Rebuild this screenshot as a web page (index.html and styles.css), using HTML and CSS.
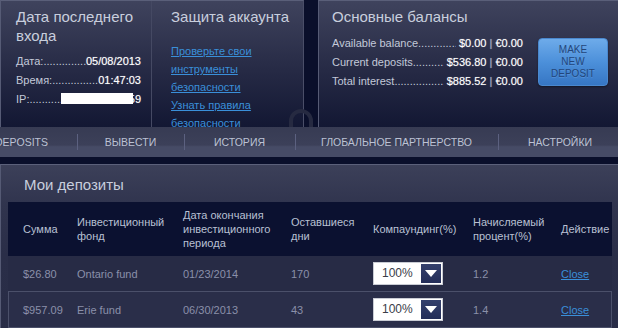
FILE: index.html
```html
<!DOCTYPE html>
<html lang="ru">
<head>
<meta charset="utf-8">
<title>Мои депозиты</title>
<link rel="stylesheet" href="styles.css">
</head>
<body>
<div class="top">
  <section class="panel login-panel">
    <div class="col col-login">
      <h2 class="panel-title">Дата последнего входа</h2>
      <div class="info">
        <div class="kv"><span class="lbl">Дата:</span><span class="dots"></span><span class="val">05/08/2013</span></div>
        <div class="kv"><span class="lbl">Время:</span><span class="dots"></span><span class="val">01:47:03</span></div>
        <div class="kv"><span class="lbl">IP:</span><span class="dots"></span><span class="val"><span class="redact"></span>.59</span></div>
      </div>
    </div>
    <div class="col col-security">
      <h2 class="panel-title">Защита аккаунта</h2>
      <div class="links">
        <a href="#" class="sec-link">Проверьте свои инструменты безопасности</a>
        <a href="#" class="sec-link">Узнать правила безопасности</a>
      </div>
      <svg class="lock" width="30" height="30" viewBox="0 0 30 30"><path d="M5 30 V14 a10 10 0 0 1 20 0 V30" fill="none" stroke="#262a41" stroke-width="4"/></svg>
    </div>
  </section>
  <section class="panel balance-panel">
    <h2 class="panel-title">Основные балансы</h2>
    <div class="balance-row">
      <div class="balances">
        <div class="kv"><span class="lbl">Available balance</span><span class="dots"></span><span class="val">$0.00 <span class="sep">|</span> €0.00</span></div>
        <div class="kv"><span class="lbl">Current deposits</span><span class="dots"></span><span class="val">$536.80 <span class="sep">|</span> €0.00</span></div>
        <div class="kv"><span class="lbl">Total interest</span><span class="dots"></span><span class="val">$885.52 <span class="sep">|</span> €0.00</span></div>
      </div>
      <button class="deposit-btn">MAKE<br>NEW<br>DEPOSIT</button>
    </div>
  </section>
</div>

<nav class="nav">
  <a href="#" class="nav-item first">DEPOSITS</a>
  <a href="#" class="nav-item w2">ВЫВЕСТИ</a>
  <a href="#" class="nav-item w3">ИСТОРИЯ</a>
  <a href="#" class="nav-item w4">ГЛОБАЛЬНОЕ ПАРТНЕРСТВО</a>
  <a href="#" class="nav-item w5">НАСТРОЙКИ</a>
</nav>

<section class="deposits">
  <h2 class="panel-title deposits-title">Мои депозиты</h2>
  <div class="table">
    <div class="thead">
      <div class="c c1">Сумма</div>
      <div class="c c2">Инвестиционный фонд</div>
      <div class="c c3">Дата окончания инвестиционного периода</div>
      <div class="c c4">Оставшиеся дни</div>
      <div class="c c5">Компаундинг(%)</div>
      <div class="c c6">Начисляемый процент(%)</div>
      <div class="c c7">Действие</div>
    </div>
    <div class="trow">
      <div class="c c1">$26.80</div>
      <div class="c c2">Ontario fund</div>
      <div class="c c3">01/23/2014</div>
      <div class="c c4">170</div>
      <div class="c c5"><div class="select"><span class="sel-val">100%</span><span class="sel-btn"><svg width="12" height="7" viewBox="0 0 12 7"><path d="M0 0 H12 L6 7 Z" fill="#fff"/></svg></span></div></div>
      <div class="c c6">1.2</div>
      <div class="c c7"><a href="#" class="close-link">Close</a></div>
    </div>
    <div class="trow bordered">
      <div class="c c1">$957.09</div>
      <div class="c c2">Erie fund</div>
      <div class="c c3">06/30/2013</div>
      <div class="c c4">43</div>
      <div class="c c5"><div class="select"><span class="sel-val">100%</span><span class="sel-btn"><svg width="12" height="7" viewBox="0 0 12 7"><path d="M0 0 H12 L6 7 Z" fill="#fff"/></svg></span></div></div>
      <div class="c c6">1.4</div>
      <div class="c c7"><a href="#" class="close-link">Close</a></div>
    </div>
  </div>
</section>
</body>
</html>
```

FILE: styles.css
```css
* { box-sizing: border-box; }
html, body {
  margin: 0;
  padding: 0;
  width: 618px;
  height: 328px;
  overflow: hidden;
  background: #0a0f2b;
  font-family: "Liberation Sans", Arial, sans-serif;
  font-size: 11px;
  color: #c3c9d9;
}
.top {
  display: flex;
  height: 127px;
  overflow: hidden;
}
.panel {
  background: linear-gradient(#3f435d 0%, #262a45 50%, #0e132f 100%);
  border-top: 1px solid #5a5f79;
  border-left: 1px solid #565b75;
  height: 140px;
}
.login-panel {
  width: 304px;
  display: flex;
  border-right: 1px solid #4a4e68;
  flex: none;
}
.balance-panel {
  margin-left: 14px;
  flex: 1;
  padding: 6px 0 0 13px;
}
.panel-title {
  margin: 0;
  font-weight: normal;
  font-size: 15px;
  line-height: 19px;
  color: #c8cedd;
}
.col { height: 100%; }
.col-login {
  width: 151px;
  padding: 6px 10px 0 15px;
  border-right: 1px solid #454963;
}
.col-security {
  flex: 1;
  padding: 6px 0 0 19px;
  position: relative;
}
.info { margin-top: 7px; }
.kv {
  display: flex;
  height: 19px;
  line-height: 19px;
  white-space: nowrap;
}
.lbl { color: #c3c9d9; }
.dots {
  flex: 1;
  overflow: hidden;
  color: #c3c9d9;
}
.dots::before {
  content: "....................................................................";
}
.val {
  color: #ffffff;
  text-shadow: 0 0 1px rgba(255,255,255,0.5);
}
.redact {
  display: inline-block;
  width: 72px;
  height: 11px;
  background: #ffffff;
  vertical-align: -1px;
  margin-right: -7px;
  position: relative;
}
.links {
  margin-top: 16px;
  width: 112px;
  line-height: 18px;
}
.sec-link {
  display: block;
  color: #3a8fd9;
  text-decoration: underline;
  font-size: 11px;
}
.lock {
  position: absolute;
  left: 134px;
  top: 106px;
}
.balance-row {
  display: flex;
  align-items: flex-start;
  margin-top: 8px;
}
.balances { width: 191px; }
.balances .val { margin-left: 3px; }
.sep { color: #9aa6c0; }
.deposit-btn {
  margin: 4px 0 0 15px;
  width: 70px;
  height: 48px;
  padding: 0;
  border: 1px solid #4a88ce;
  border-radius: 4px;
  background: linear-gradient(#6eabea 0%, #4c90da 50%, #3676c4 100%);
  color: #23467a;
  font-family: "Liberation Sans", Arial, sans-serif;
  font-size: 10px;
  line-height: 12px;
  text-shadow: 0 1px 0 rgba(110,165,230,0.45);
  box-shadow: 0 1px 2px rgba(0,0,0,0.4);
}
.nav {
  display: flex;
  height: 30px;
  background: linear-gradient(#373b53 0%, #3c4059 60%, #464b66 66%, #464b66 100%);
  overflow: hidden;
}
.nav-item {
  flex: none;
  display: flex;
  align-items: center;
  justify-content: center;
  color: #bcc2d4;
  text-decoration: none;
  font-size: 10.5px;
  position: relative;
}
.nav-item + .nav-item::before {
  content: "";
  position: absolute;
  left: 0;
  top: 7px;
  height: 16px;
  border-left: 1px solid #5c6180;
}
.first { width: 77px; justify-content: flex-end; padding-right: 29px; }
.w2 { width: 107px; }
.w3 { width: 111px; }
.w4 { width: 203px; }
.w5 { width: 124px; }
.deposits {
  margin-top: 7px;
  height: 200px;
  border-top: 1px solid #5b607a;
  border-left: 1px solid #555a74;
  background: linear-gradient(#3c4059 0px, #30344e 40px, #2a2e48 90px, #282c46 100%);
  padding: 10px 0 0 7px;
}
.deposits-title {
  padding-left: 16px;
  margin-bottom: 8px;
}
.table {
  width: 604px;
  overflow: hidden;
}
.thead, .trow {
  display: grid;
  grid-template-columns: 69px 106px 108px 82px 100px 88px 51px;
  align-items: center;
}
.thead {
  background: #0b1130;
  height: 54px;
  color: #b9c0d3;
  line-height: 14px;
}
.trow {
  height: 35px;
  color: #8a90aa;
  background: #272b45;
}
.trow.bordered {
  height: 37px;
  background: #2a2e49;
  outline: 1px solid #4b506a;
  outline-offset: -1px;
}
.c { padding-right: 6px; }
.c1 { padding-left: 15px; }
.c7 { white-space: nowrap; padding-right: 0; }
.select {
  display: flex;
  align-items: stretch;
  width: 70px;
  height: 23px;
  background: #ffffff;
  border: 1px solid #c9ccd4;
  padding: 1px;
}
.sel-val {
  flex: 1;
  color: #3a3d48;
  font-size: 12px;
  line-height: 19px;
  padding-left: 7px;
}
.sel-btn {
  width: 20px;
  background: linear-gradient(#34406c, #232d58);
  display: flex;
  align-items: center;
  justify-content: center;
}
.close-link {
  color: #3a8fd9;
  text-decoration: underline;
}
```
